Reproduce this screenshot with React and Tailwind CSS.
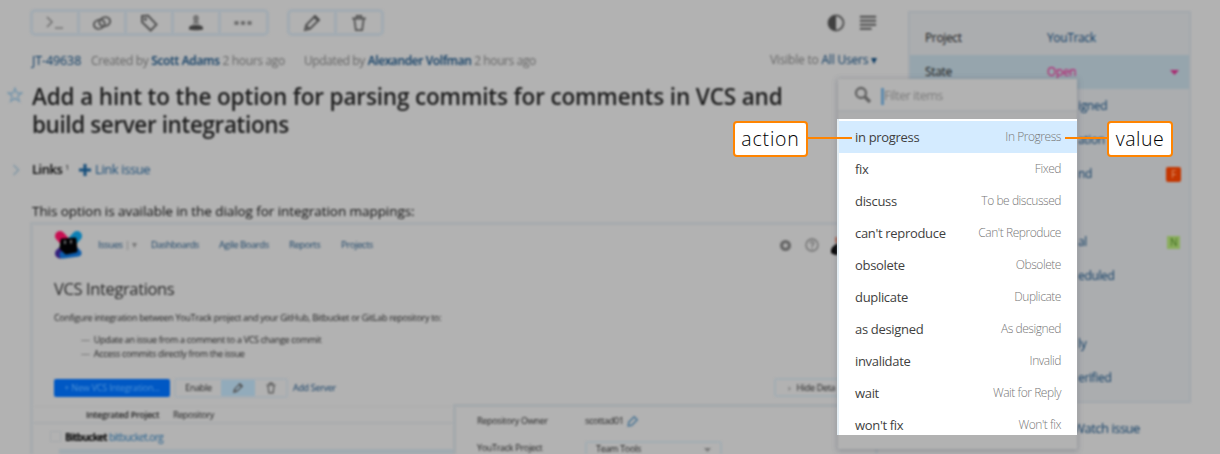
import React from "react";

const items = [
  ["in progress", "In Progress"],
  ["fix", "Fixed"],
  ["discuss", "To be discussed"],
  ["can't reproduce", "Can't Reproduce"],
  ["obsolete", "Obsolete"],
  ["duplicate", "Duplicate"],
  ["as designed", "As designed"],
  ["invalidate", "Invalid"],
  ["wait", "Wait for Reply"],
  ["won't fix", "Won't fix"],
];

function Icon({ children, className = "", size = 20 }) {
  return (
    <svg
      width={size}
      height={size}
      viewBox="0 0 20 20"
      fill="none"
      stroke="#545454"
      strokeWidth="2"
      className={"shrink-0 " + className}
    >
      {children}
    </svg>
  );
}

function Pencil(props) {
  return (
    <Icon {...props}>
      <path d="M3 17l1.2-5L13 3.2l3.8 3.8L8 15.8z" />
      <path d="M11 4l5 5 2-2.200-4.800-4.800z" fill="#4c4c4c" stroke="none" />
      <path d="M4 12.5L7.5 16" />
    </Icon>
  );
}

function Trash(props) {
  return (
    <Icon {...props}>
      <path d="M2.500 5h15M7.500 4.500V2h5v2.500M4.800 5.500l1.700 12.500h7l1.700-12.500" />
    </Icon>
  );
}

function Tool({ children, last }) {
  return (
    <div
      className={
        "flex h-full items-center justify-center " +
        (last ? "w-[44px]" : "w-[47px] border-r-[3px] border-[#a2abb2]")
      }
    >
      {children}
    </div>
  );
}

function Toolbar() {
  return (
    <div className="flex h-[27px] w-[850px] shrink-0 items-stretch">
      <div className="flex w-[239px] rounded-[5px] border-[3px] border-[#a2abb2]">
        <Tool>
          <Icon className="mt-px">
            <path d="M2 4l5 5-5 5M10 15h8" stroke="#747474" strokeWidth="1.700" />
          </Icon>
        </Tool>
        <Tool>
          <Icon>
            <ellipse cx="7.3" cy="11.2" rx="5.5" ry="4.4" transform="rotate(-20 7.3 11.2)" />
            <ellipse cx="12.7" cy="8.8" rx="5.5" ry="4.4" transform="rotate(-20 12.7 8.8)" />
          </Icon>
        </Tool>
        <Tool>
          <Icon>
            <path d="M3 3l6-.5 8.5 9-5.8 6L3 9z" />
            <circle cx="6.3" cy="6.2" r="0.700" />
          </Icon>
        </Tool>
        <Tool>
          <Icon>
            <path d="M10 2c-2.200 0-3 1.600-2.800 3.800.1 1.500.5 2 .9 2.700L6.500 11h7l-1.600-2.500c.4-.7.8-1.200.9-2.700C13 3.600 12.200 2 10 2z" fill="#747474" stroke="none" />
            <path d="M3 16.500c-.6-3.500 2-4.500 7-4.500s7.600 1 7 4.500c-3 1-11 1-14 0z" fill="#404040" stroke="none" />
          </Icon>
        </Tool>
        <Tool last>
          <Icon>
            <path d="M1.500 10h4M8 10h4M14.500 10h4" strokeWidth="3.500" stroke="#666" />
          </Icon>
        </Tool>
      </div>
      <div className="ml-[18px] flex w-[97px] rounded-[5px] border-[3px] border-[#a2abb2]">
        <Tool>
          <Pencil size={20} />
        </Tool>
        <Tool last>
          <Trash size={18} />
        </Tool>
      </div>
      <div className="ml-auto flex items-center gap-[13px] pr-[3px]">
        <Icon size={20}>
          <circle cx="10" cy="10" r="7.500" stroke="#555" strokeWidth="2" />
          <path d="M10 2.500a7.500 7.500 0 000 15z" fill="#404040" stroke="none" />
        </Icon>
        <Icon size={18}>
          <path d="M1 3h18M1 7.500h18M1 12h18M1 16.500h13" stroke="#4c4c4c" strokeWidth="2.200" />
        </Icon>
      </div>
    </div>
  );
}

function YouTrackLogo() {
  return (
    <svg width="30" height="30" viewBox="0 0 30 30" className="shrink-0">
      <path d="M7 6l8 9" stroke="#c80f52" strokeWidth="10" strokeLinecap="round" />
      <path d="M24 6l-9 10" stroke="#0a7fb5" strokeWidth="10" strokeLinecap="round" />
      <path d="M7 23.500l10-8" stroke="#35207c" strokeWidth="10" strokeLinecap="round" />
      <path d="M10 25l15-2-6-6" stroke="#0d5cab" strokeWidth="7" strokeLinecap="round" strokeLinejoin="round" />
      <path d="M9 10l13-1 1 12-10 2-5-5z" fill="#020204" stroke="#020204" strokeWidth="3" strokeLinejoin="round" />
      <path d="M12 10.500v3.500M18 10v3.500" stroke="#999" strokeWidth="1.400" />
    </svg>
  );
}

function Preview() {
  return (
    <div className="flex h-[240px] w-[848px] shrink-0 flex-col overflow-hidden border-[3px] border-[#a7abae] text-[9px] leading-none tracking-[-0.3px] text-[#222]">
      <div className="flex h-[40px] shrink-0 items-center pl-[20px] text-[9.500px] tracking-[-0.450px] text-[#1c4568]">
        <YouTrackLogo />
        <span className="ml-[15px] w-[53px]">
          Issues <span className="text-[#777]">| ▾</span>
        </span>
        <span className="w-[68px] tracking-[-0.600px]">Dashboards</span>
        <span className="w-[70px]">Agile Boards</span>
        <span className="w-[52px]">Reports</span>
        <span className="w-[60px]">Projects</span>
        <Icon size={13} className="ml-auto">
          <circle cx="10" cy="10" r="6" strokeWidth="5" stroke="#666" />
        </Icon>
        <Icon size={14} className="ml-[13px]">
          <circle cx="10" cy="10" r="8.500" stroke="#707070" />
          <path d="M7.500 8c0-4 5-3.500 5-.5 0 2-2.500 2-2.500 4.500M10 14v2" stroke="#707070" />
        </Icon>
        <svg width="24" height="24" viewBox="0 0 24 24" className="ml-[12px] mr-[20px]">
          <path d="M0 20c-1-4 2-8 8-10h10v12H4z" fill="#080808" />
          <path d="M4 4h8v6H4z" fill="#a86c5c" />
        </svg>
      </div>
      <div className="flex h-[49px] shrink-0 items-center pl-[21px] text-[16.500px] tracking-[-0.38px] text-[#282828]">
        VCS Integrations
      </div>
      <div className="h-[17px] shrink-0 whitespace-nowrap pl-[21px] leading-[8px] tracking-[-0.3px]">
        Configure integration between YouTrack project and your GitHub, Bitbucket or GitLab repository to:
      </div>
      <div className="flex h-[42px] shrink-0 flex-col pl-[48px] pt-[2px] leading-[13.500px] tracking-[-0.3px]">
        <span><span className="mr-[2px] text-[#666]">—</span> Update an issue from a comment to a VCS change commit</span>
        <span><span className="mr-[2px] text-[#666]">—</span> Access commits directly from the issue</span>
      </div>
      <div className="flex h-[29px] shrink-0 items-center pl-[21px]">
        <div className="flex h-[18px] w-[116px] shrink-0 items-center justify-center rounded-[2px] bg-[#0058c4] text-[9px] tracking-[-0.2px] text-[#4c92d6]">
          + New VCS Integration...
        </div>
        <div className="ml-[4px] flex h-[20px] w-[114px] shrink-0 rounded-[3px] border-2 border-[#a6adb3]">
          <span className="flex w-[45px] items-center justify-center">Enable</span>
          <span className="flex w-[34px] items-center justify-center bg-[#92abbb]"><Pencil size={12} /></span>
          <span className="flex flex-1 items-center justify-center"><Trash size={12} /></span>
        </div>
        <span className="ml-[5px] shrink-0 tracking-[-0.3px] text-[#143f66]">Add Server</span>
        <div className="ml-auto flex h-[19px] w-[101px] shrink-0 items-center gap-[6px] rounded-[3px] border-2 border-[#a3adb3] pl-[12px]">
          <span className="text-[#555]">›</span> <span className="whitespace-nowrap">Hide Deta</span>
        </div>
      </div>
      <div className="flex min-h-0 flex-1 pt-[2px]">
        <div className="flex w-[420px] flex-col pt-[2px]">
          <div className="flex h-[18px] shrink-0 items-center border-b-2 border-t border-b-[#a9acae] border-t-[#adadad] pl-[53px]">
            <span className="w-[87px] font-semibold tracking-[-0.3px]">Integrated Project</span>
            <span className="tracking-[-0.4px]">Repository</span>
          </div>
          <div className="flex h-[25px] shrink-0 items-center pl-[17px] text-[10px]">
            <span className="h-[11px] w-[11px] border border-[#a6a9ac]" />
            <span className="ml-[4px] w-[44px] font-bold tracking-[-0.75px] text-black">Bitbucket</span>
            <span className="tracking-[-0.600px] text-[#24608e]">bitbucket.org</span>
          </div>
          <div className="ml-[26px] h-[20px] bg-[#a1abb1]" />
        </div>
        <div className="flex flex-1 flex-col border-l-[3px] border-t-[3px] border-[#a4a9ac] pl-[21px]">
          <div className="flex h-[27px] shrink-0 items-center">
            <span className="w-[108px]">Repository Owner</span>
            <span className="text-[9.500px] tracking-[-0.55px]">scottad01</span>
            <Icon size={12} className="ml-[3px]">
              <path d="M2 18l1-6L12 3l5 5-9 9z" stroke="#4a7595" strokeWidth="2.500" />
            </Icon>
          </div>
          <div className="flex h-[20px] shrink-0 items-start pt-[7px]">
            <span className="w-[108px] pt-[2px] leading-[10px]">YouTrack Project</span>
            <div className="flex h-[13px] w-[137px] items-start justify-between rounded-t-[3px] border-2 border-b-0 border-[#a3adb3] px-[9px] pt-px leading-[10px]">
              <span>Team Tools</span>
              <svg width="7" height="4" viewBox="0 0 7 4" className="mt-[4px]">
                <path d="M0 0h7L3.500 4z" fill="#777" />
              </svg>
            </div>
          </div>
        </div>
      </div>
    </div>
  );
}

function Issue() {
  return (
    <main className="flex w-[878px] shrink-0 flex-col pl-[30px] pt-[9px]">
      <Toolbar />
      <div className="flex h-[47px] shrink-0 items-center whitespace-nowrap pl-[2px] pt-[3px] text-[12px] text-[#666]">
        <span className="w-[59px] text-[12.500px] font-medium tracking-[-0.1px] text-[#0e3c64]">JT-49638</span>
        <span className="w-[213px] tracking-[-0.33px]">
          Created by <b className="font-semibold text-[#0e3c64]">Scott Adams</b> 2 hours ago
        </span>
        <span className="tracking-[-0.4px]">
          Updated by <b className="font-semibold text-[#0e3c64]">Alexander Volfman</b> 2 hours ago
        </span>
        <span className="ml-auto mr-[1px] pb-[2px] tracking-[-0.2px]">
          Visible to <b className="font-medium text-[#0e3c64]">All Users ▾</b>
        </span>
      </div>
      <div className="ml-[-23px] flex h-[57px] shrink-0">
        <svg width="16" height="16" viewBox="0 0 20 20" className="mt-[4px]" fill="none" stroke="#7896ab" strokeWidth="1.800">
          <path d="M10 1.500l2.300 6h6.200l-5 3.900 1.900 6.400L10 14l-5.400 3.800 1.900-6.400-5-3.900h6.200z" />
        </svg>
        <h1 className="ml-[9px] whitespace-nowrap text-[22.500px] font-semibold leading-[28px] tracking-[-0.15px] text-[#1c1c1c]">
          Add a hint to the option for parsing commits for comments in VCS and
          <br />
          <span className="tracking-[-0.4px]">build server integrations</span>
        </h1>
      </div>
      <div className="ml-[-18px] flex h-[60px] shrink-0 items-center whitespace-nowrap text-[13px]">
        <svg width="8" height="12" viewBox="0 0 8 12" fill="none" stroke="#8298a6" strokeWidth="1.500">
          <path d="M1.500 1l5 5-5 5" />
        </svg>
        <span className="ml-[12px] w-[33px] font-semibold tracking-[-0.5px] text-[#080808]">Links</span>
        <span className="w-[13px] pb-[6px] text-[8px] text-[#222]">1</span>
        <svg width="14" height="14" viewBox="0 0 14 14" stroke="#174f7c" strokeWidth="3">
          <path d="M7 1v12M1 7h12" />
        </svg>
        <span className="ml-[3px] tracking-[-0.4px] text-[#1c4e78]">Link issue</span>
      </div>
      <p className="h-[22px] shrink-0 whitespace-nowrap pl-[2px] text-[13.500px] leading-[22px] tracking-[-0.06px] text-[#101010]">
        This option is available in the dialog for integration mappings:
      </p>
      <Preview />
    </main>
  );
}

function Field({ label, value, active, badge }) {
  return (
    <div
      className={
        "flex h-[34px] shrink-0 items-center pr-[8px] " +
        (label ? "pl-[15px] " : "pl-[168px] ") +
        (active ? "bg-[#96a5ad]" : "")
      }
    >
      {label && <span className="w-[122px] font-medium text-[#181818]">{label}</span>}
      <span className={"font-medium " + (active ? "text-[#b8106c]" : "text-[#0e3c64]")}>{value}</span>
      {active && (
        <svg width="9" height="5" viewBox="0 0 9 5" className="ml-auto mr-[2px]">
          <path d="M0 0h9L4.500 5z" fill="#a92970" />
        </svg>
      )}
      {badge}
    </div>
  );
}

function Sidebar() {
  return (
    <aside className="ml-[30px] flex w-[283px] shrink-0 flex-col pt-[11px] text-[12px] tracking-[-0.35px]">
      <div className="flex h-[392px] shrink-0 flex-col border-2 border-[#a3a8ad] bg-[#abadaf] pt-[8px]">
        <Field label="Project" value="YouTrack" />
        <Field label="State" value="Open" active />
        <Field value="igned" />
        <Field value="ation" />
        <Field
          value="nd"
          badge={<span className="ml-auto flex h-[15px] w-[15px] items-center justify-center rounded-[2px] bg-[#c43600] text-[10px] text-[#df9068]">F</span>}
        />
        <Field />
        <Field
          value="al"
          badge={<span className="ml-auto mr-[1px] flex h-[13px] w-[13px] items-center justify-center bg-[#8aad5d] text-[10px] text-[#3f6d20]">N</span>}
        />
        <Field value="eduled" />
        <Field />
        <Field value="ly" />
        <Field value="erified" />
      </div>
      <div className="flex h-[51px] shrink-0 items-center pl-[165px] text-[13px] font-medium tracking-[-0.5px] text-[#0e3c64]">Watch issue</div>
    </aside>
  );
}

function Popup() {
  return (
    <div className="absolute left-[838px] top-[79px] h-[370px] w-[239px]">
      <div className="h-full w-full bg-[#b2b2b2] shadow-[0_1px_5px_1px_rgba(80,90,105,0.35)] blur-[0.9px]">
        <div className="flex h-[33px] items-center border-b-2 border-[#a7a9ab] pl-[16px] pt-[3px]">
          <svg width="18" height="18" viewBox="0 0 18 18" fill="none" stroke="#606060" className="mb-[3px]">
            <circle cx="7" cy="7" r="5" strokeWidth="2.300" />
            <path d="M10.500 10.500l5.500 5.500" strokeWidth="3.200" />
          </svg>
          <span className="ml-[9px] h-[17px] w-[3px] bg-[#5f8aac]" />
          <span className="text-[12.500px] tracking-[-0.5px] text-[#7c7c7c]">Filter items</span>
        </div>
        <div className="h-[8px] bg-[#adadae]" />
      </div>
      <ul className="absolute left-[-1px] top-[40px] flex h-[316px] w-[240px] flex-col border-l-2 border-[#e3edf3] bg-white pt-[2px]">
        {items.map(([action, value], i) => (
          <li
            key={action}
            className={
              "flex h-[32px] shrink-0 items-center justify-between whitespace-nowrap px-[16px] pb-px " +
              (i === 0 ? "bg-[#d4ebff]" : "")
            }
          >
            <span className="text-[13px] leading-[20px] tracking-[-0.32px] text-[#3f3f3f]">{action}</span>
            <span className="pt-px text-[12px] font-light leading-[20px] tracking-[-0.45px] text-[#777]">{value}</span>
          </li>
        ))}
      </ul>
    </div>
  );
}

function Callout({ children, className }) {
  return (
    <div
      className={
        "absolute top-[121px] flex h-[36px] items-center justify-center rounded-[4px] border-2 border-[#ff8400] bg-white pb-px text-[19.500px] font-[350] leading-none text-black " +
        className
      }
    >
      {children}
    </div>
  );
}

export default function App() {
  return (
    <div className="relative h-[454px] w-[1220px] overflow-hidden bg-[#b2b2b2] font-['Open_Sans','Noto_Sans',sans-serif]">
      <div className="flex h-full w-full overflow-hidden blur-[1px]">
        <Issue />
        <Sidebar />
      </div>
      <Popup />
      <div className="absolute left-[807px] top-[137px] h-[2px] w-[45px] bg-[#ff8400]" />
      <div className="absolute left-[1065px] top-[137px] h-[2px] w-[43px] bg-[#ff8400]" />
      <Callout className="left-[733px] w-[75px] tracking-[0.8px]">action</Callout>
      <Callout className="left-[1107px] w-[66px] tracking-[0.5px]">value</Callout>
    </div>
  );
}
